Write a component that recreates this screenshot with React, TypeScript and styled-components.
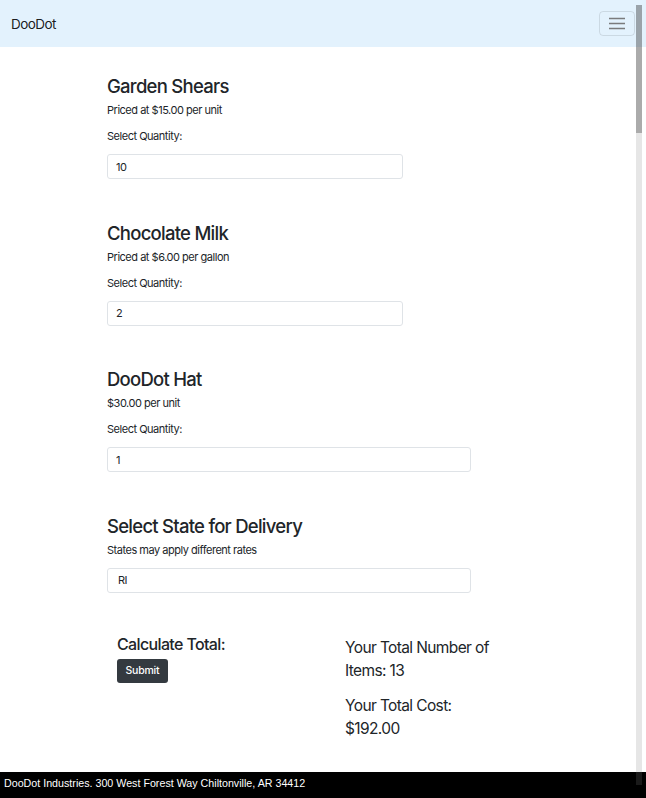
import React from 'react';
import styled, { createGlobalStyle } from 'styled-components';

const GlobalStyle = createGlobalStyle`
	html,
	body {
		margin: 0;
		padding: 0;
		overflow: hidden;
		background: #fff;
		color: #212529;
		font-family: Inter, 'Noto Sans', 'Liberation Sans', sans-serif;
		letter-spacing: -0.03em;
	}
	* {
		box-sizing: border-box;
	}
`;

const Navbar = styled.nav`
	height: 47px;
	padding: 0 11px;
	background: #e3f2fd;
	display: flex;
	align-items: center;
	justify-content: space-between;
`;

const Brand = styled.a`
	font-size: 13.5px;
	line-height: 20px;
	letter-spacing: -0.04em;
	color: rgba(0, 0, 0, 0.9);
	text-decoration: none;
`;

const Toggler = styled.button`
	width: 36px;
	height: 25px;
	padding: 0;
	border: 1px solid rgba(0, 0, 0, 0.1);
	border-radius: 4px;
	background: transparent;
	display: flex;
	align-items: center;
	justify-content: center;
`;

const Main = styled.main`
	padding: 28px 0 60px 107px;
`;

const Section = styled.section`
	margin-bottom: 42.5px;
`;

const Heading = styled.h3`
	margin: 0 0 5px;
	font-size: 18.5px;
	line-height: 22px;
	font-weight: 500;
	letter-spacing: -0.04em;
`;

const Text = styled.p`
	margin: 0 0 9.5px;
	font-size: 11px;
	line-height: 16.5px;
`;

const Field = styled.input<{ $width: number; $indent?: number }>`
	display: block;
	width: ${(p) => p.$width}px;
	height: 25px;
	padding: 0 ${(p) => p.$indent ?? 8}px;
	border: 1px solid #dfe3e7;
	border-radius: 3px;
	background: #fff;
	color: #212529;
	font-family: inherit;
	font-size: 11px;
	letter-spacing: inherit;
	outline: none;
`;

const TotalsRow = styled.div`
	margin-top: 1px;
	display: grid;
	grid-template-columns: 228px 170px;
	align-items: start;
`;

const Column = styled.div<{ $offset?: number }>`
	padding-left: 10px;
	padding-top: ${(p) => p.$offset ?? 0}px;
`;

const SubHeading = styled.h5`
	margin: 0 0 4px;
	font-size: 16px;
	line-height: 19.2px;
	font-weight: 500;
	letter-spacing: -0.04em;
`;

const SubmitButton = styled.button`
	width: 51px;
	height: 24px;
	padding: 0;
	border: none;
	border-radius: 3px;
	background: #343a40;
	color: #fff;
	font-family: inherit;
	font-size: 10.5px;
	font-weight: 500;
	letter-spacing: -0.02em;
`;

const Result = styled.p`
	margin: 0 0 12px;
	width: 155px;
	font-size: 15.5px;
	line-height: 23px;
	letter-spacing: -0.04em;
`;

const Footer = styled.footer`
	position: fixed;
	left: 0;
	right: 0;
	bottom: 0;
	height: 26px;
	padding: 4px 4px 0;
	background: #000;
	color: #fff;
	font-family: 'Liberation Sans', Arial, sans-serif;
	font-size: 10.7px;
	line-height: 14px;
	letter-spacing: 0;
`;

const ScrollTrack = styled.div`
	position: fixed;
	top: 5px;
	bottom: 13px;
	right: 4px;
	width: 6px;
	background: rgba(128, 128, 128, 0.2);
`;

const ScrollThumb = styled.div`
	height: 128px;
	background: rgba(0, 0, 0, 0.26);
`;

type Product = {
	name: string;
	price: string;
	qty: string;
	width: number;
};

const products: Product[] = [
	{ name: 'Garden Shears', price: 'Priced at $15.00 per unit', qty: '10', width: 296 },
	{ name: 'Chocolate Milk', price: 'Priced at $6.00 per gallon', qty: '2', width: 296 },
	{ name: 'DooDot Hat', price: '$30.00 per unit', qty: '1', width: 364 },
];

function App() {
	return (
		<>
			<GlobalStyle />
			<Navbar>
				<Brand href="#">DooDot</Brand>
				<Toggler aria-label="Toggle navigation">
					<svg width="16" height="13" viewBox="0 0 16 13">
						<path d="M0 1.5h16M0 6.5h16M0 11.5h16" stroke="#7a7b7d" strokeWidth="1.6" />
					</svg>
				</Toggler>
			</Navbar>

			<Main>
				{products.map((p) => (
					<Section key={p.name}>
						<Heading>{p.name}</Heading>
						<Text>{p.price}</Text>
						<Text>Select Quantity:</Text>
						<Field $width={p.width} defaultValue={p.qty} />
					</Section>
				))}

				<Section>
					<Heading>Select State for Delivery</Heading>
					<Text>States may apply different rates</Text>
					<Field $width={364} $indent={10} defaultValue="RI" />
				</Section>

				<TotalsRow>
					<Column>
						<SubHeading>Calculate Total:</SubHeading>
						<SubmitButton>Submit</SubmitButton>
					</Column>
					<Column $offset={1}>
						<Result>Your Total Number of Items: 13</Result>
						<Result>Your Total Cost: $192.00</Result>
					</Column>
				</TotalsRow>
			</Main>

			<Footer>DooDot Industries. 300 West Forest Way Chiltonville, AR 34412</Footer>

			<ScrollTrack>
				<ScrollThumb />
			</ScrollTrack>
		</>
	);
}

export default App;
